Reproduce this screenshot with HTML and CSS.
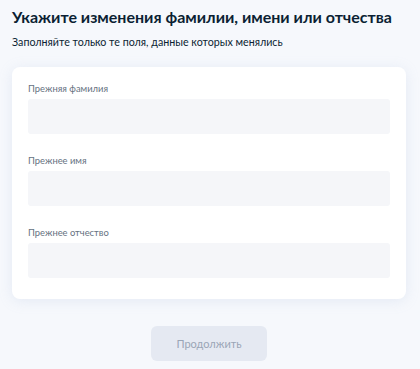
FILE: index.html
```
<!DOCTYPE html>
<html lang="ru">

<head>
    <meta charset="UTF-8">
    <meta name="viewport" content="width=device-width, initial-scale=1.0">
    <title>Изменение ФИО</title>
    <link rel="stylesheet" href="styles.css">
</head>

<body>
    <div class="page">
        <h1 class="title">Укажите изменения фамилии, имени или отчества</h1>
        <p class="subtitle">Заполняйте только те поля, данные которых менялись</p>

        <div class="card">
            <div class="field">
                <label for="lastname">Прежняя фамилия</label>
                <input type="text" id="lastname">
            </div>
            <div class="field">
                <label for="firstname">Прежнее имя</label>
                <input type="text" id="firstname">
            </div>
            <div class="field">
                <label for="middlename">Прежнее отчество</label>
                <input type="text" id="middlename">
            </div>
        </div>

        <div class="actions">
            <button class="btn-next" disabled>Продолжить</button>
        </div>
    </div>
</body>

</html>
```

FILE: styles.css
```
body {
    font-family: Lato, "Noto Sans", sans-serif;
    margin: 0;
    padding: 0;
    background-color: #f6f8fc;
    color: #0b1f33;
}

.page {
    padding: 7px 14px 0 12px;
}

.title {
    font-size: 16px;
    font-weight: bold;
    line-height: 20px;
    margin: 0;
    white-space: nowrap;
}

.subtitle {
    font-size: 10.7px;
    line-height: 14px;
    margin: 8px 0 0;
}

.card {
    margin-top: 18px;
    padding: 15px 16px 21px;
    background-color: #ffffff;
    border-radius: 8px;
    box-shadow: 0 2px 14px rgba(150, 170, 210, 0.18);
}

.field + .field {
    margin-top: 20px;
}

label {
    display: block;
    font-size: 9.4px;
    line-height: 13px;
    color: #66727f;
    margin-bottom: 4px;
}

input[type="text"] {
    display: block;
    box-sizing: border-box;
    width: 100%;
    height: 35px;
    padding: 0 12px;
    border: none;
    border-radius: 3px;
    background-color: #f5f6f9;
}

.actions {
    display: flex;
    justify-content: center;
    padding-top: 27px;
}

.btn-next {
    width: 116px;
    height: 35px;
    font-family: Lato, "Noto Sans", sans-serif;
    font-size: 11px;
    color: #9aa5b6;
    background-color: #e5e9f2;
    border: none;
    border-radius: 6px;
}
```
